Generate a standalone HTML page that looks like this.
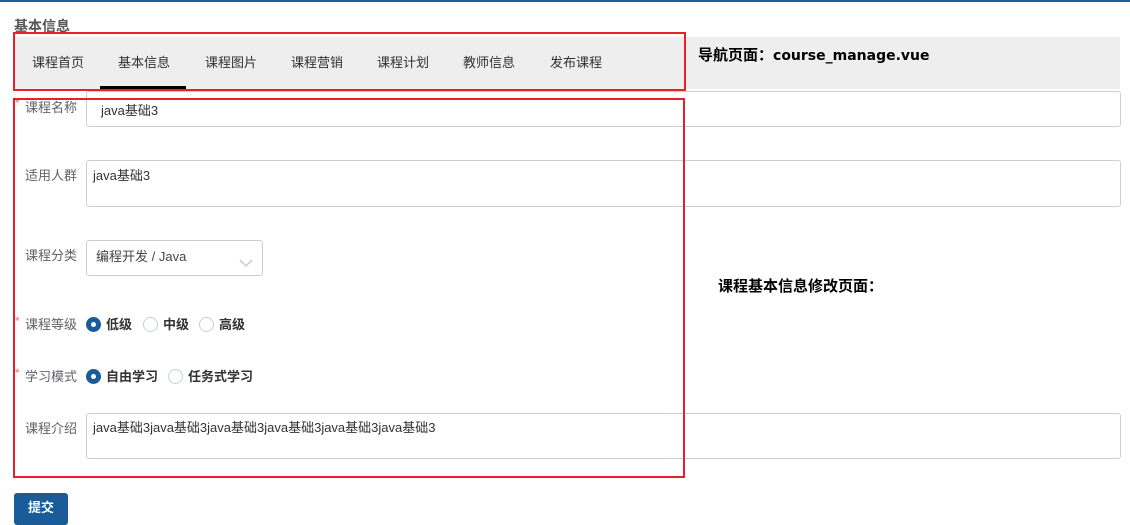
<!DOCTYPE html>
<html><head><meta charset="utf-8"><style>
*{box-sizing:border-box;margin:0;padding:0}
body{width:1130px;height:525px;position:relative;background:#fff;font-family:"Liberation Sans","Noto Sans CJK SC",sans-serif;font-size:13px;color:#333;overflow:hidden}
.a{position:absolute}
.lbl{position:absolute;color:#606266;font-size:13px;left:25px}
.req{color:#f56c6c;position:absolute;left:15px;font-size:12px}
.inp{position:absolute;border:1px solid #c8cfd8;border-radius:3px;background:#fff;font-size:13px;color:#333}
.tab{position:absolute;top:52px;font-size:13px;color:#303133}
.rb{position:absolute;width:15px;height:15px;border-radius:50%;border:1px solid #c8cfd8;background:#fff}
.rb.on{background:#1a5c9a;border-color:#1a5c9a}
.rb.on:after{content:"";position:absolute;left:4px;top:4px;width:5px;height:5px;border-radius:50%;background:#fff}
.rt{position:absolute;font-weight:bold;font-size:13px;color:#333}
.red{position:absolute;border:2px solid #e8202a}
</style></head><body>
<div class="a" style="left:0;top:0;width:1130px;height:2px;background:#1a5fa0"></div>
<div class="a" style="left:14px;top:16px;font-size:14px;font-weight:bold;color:#555">基本信息</div>
<div class="a" style="left:14px;top:37px;width:1106px;height:52px;background:#eeeeee"></div>
<div class="tab" style="left:32px">课程首页</div>
<div class="tab" style="left:118px">基本信息</div>
<div class="tab" style="left:205px">课程图片</div>
<div class="tab" style="left:291px">课程营销</div>
<div class="tab" style="left:377px">课程计划</div>
<div class="tab" style="left:463px">教师信息</div>
<div class="tab" style="left:550px">发布课程</div>
<div class="a" style="left:100px;top:86px;width:86px;height:3px;background:#000"></div>
<div class="red" style="left:13px;top:32px;width:673px;height:59px"></div>
<div class="a" style="left:698px;top:44px;font-size:15px;font-weight:bold;color:#000">导航页面：<span style="font-family:'DejaVu Sans',sans-serif;font-size:14px">course_manage.vue</span></div>

<span class="req" style="top:96px">*</span><div class="lbl" style="top:97px">课程名称</div>
<div class="inp" style="left:86px;top:91px;width:1035px;height:36px;padding:8px 14px">java基础3</div>
<div class="lbl" style="top:165px">适用人群</div>
<div class="inp" style="left:86px;top:160px;width:1035px;height:47px;padding:4px 6px">java基础3</div>
<div class="lbl" style="top:245px">课程分类</div>
<div class="inp" style="left:86px;top:240px;width:177px;height:36px;padding:5px 9px;color:#444">编程开发 / Java
<svg class="a" style="left:152px;top:18px" width="14" height="9" viewBox="0 0 14 9"><path d="M1 1l6 6 6-6" fill="none" stroke="#c0c4cc" stroke-width="1.3"/></svg></div>
<div class="a" style="left:718px;top:275px;font-size:15px;font-weight:bold;color:#000">课程基本信息修改页面：</div>

<span class="req" style="top:314px">*</span><div class="lbl" style="top:314px">课程等级</div>
<div class="rb on" style="left:86px;top:317px"></div><div class="rt" style="left:106px;top:314px">低级</div>
<div class="rb" style="left:143px;top:317px"></div><div class="rt" style="left:163px;top:314px">中级</div>
<div class="rb" style="left:199px;top:317px"></div><div class="rt" style="left:219px;top:314px">高级</div>

<span class="req" style="top:366px">*</span><div class="lbl" style="top:366px">学习模式</div>
<div class="rb on" style="left:86px;top:369px"></div><div class="rt" style="left:106px;top:366px">自由学习</div>
<div class="rb" style="left:168px;top:369px"></div><div class="rt" style="left:188px;top:366px">任务式学习</div>

<div class="lbl" style="top:418px">课程介绍</div>
<div class="inp" style="left:86px;top:413px;width:1035px;height:46px;padding:3px 6px">java基础3java基础3java基础3java基础3java基础3java基础3</div>
<div class="red" style="left:13px;top:98px;width:672px;height:380px"></div>

<div class="a" style="left:14px;top:493px;width:54px;height:32px;background:#1a5c9a;border-radius:3px;color:#fff;font-size:13px;font-weight:bold;text-align:center;line-height:30px">提交</div>
</body></html>
